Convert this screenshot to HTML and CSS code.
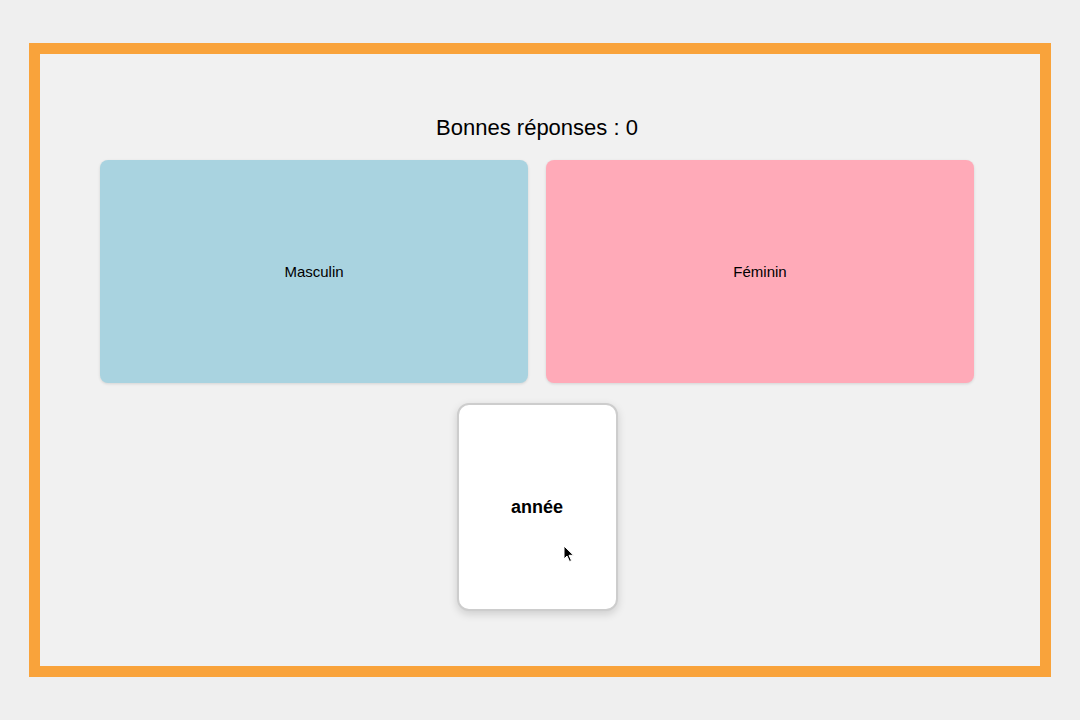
FILE: index.html
```html
<!DOCTYPE html>
<html lang="fr">
<head>
<meta charset="utf-8">
<title>Genre des mots</title>
<link rel="stylesheet" href="styles.css">
</head>
<body>
<div class="frame">
  <div class="content">
    <h1 class="score">Bonnes réponses : 0</h1>
    <div class="zones">
      <div class="zone zone-m">Masculin</div>
      <div class="zone zone-f">Féminin</div>
    </div>
    <div class="deck">
      <div class="card">année
        <svg class="cursor" width="12" height="18" viewBox="0 0 12 18"><path d="M1 1 L1 14 L4 11 L6.5 16.5 L8.5 15.6 L6 10.3 L10.5 10.3 Z" fill="#000" stroke="#fff" stroke-width="1"/></svg>
      </div>
    </div>
  </div>
</div>
</body>
</html>
```
FILE: styles.css
```css
html, body {
  margin: 0;
  padding: 0;
}
body {
  background: #efefef;
  font-family: "Liberation Sans", Arial, sans-serif;
  width: 1080px;
  height: 720px;
  overflow: hidden;
}
.frame {
  box-sizing: border-box;
  margin: 43px 0 0 29px;
  width: 1022px;
  height: 634px;
  border: 11px solid #f9a33b;
  background: #f1f1f1;
}
.content {
  width: 874px;
  margin-left: 60px;
  padding-top: 61px;
  display: flex;
  flex-direction: column;
  align-items: center;
}
.score {
  margin: 0;
  font-size: 22px;
  line-height: 26px;
  font-weight: normal;
  color: #000;
}
.zones {
  margin-top: 19px;
  width: 100%;
  display: grid;
  grid-template-columns: 1fr 1fr;
  gap: 18px;
}
.zone {
  height: 223px;
  border-radius: 8px;
  display: flex;
  align-items: center;
  justify-content: center;
  font-size: 15px;
  color: #000;
  box-shadow: 0 1px 3px rgba(0,0,0,0.12);
}
.zone-m { background: #a9d3e0; }
.zone-f { background: #ffaab8; }
.deck {
  margin-top: 20px;
  display: flex;
  justify-content: center;
}
.card {
  position: relative;
  box-sizing: border-box;
  width: 161px;
  height: 208px;
  background: #fff;
  border: 2px solid #cdcdcd;
  border-radius: 12px;
  box-shadow: 0 3px 8px rgba(0,0,0,0.15);
  display: flex;
  align-items: center;
  justify-content: center;
  font-weight: bold;
  font-size: 18px;
  color: #000;
}
.cursor {
  position: absolute;
  left: 104px;
  top: 140px;
}
```
